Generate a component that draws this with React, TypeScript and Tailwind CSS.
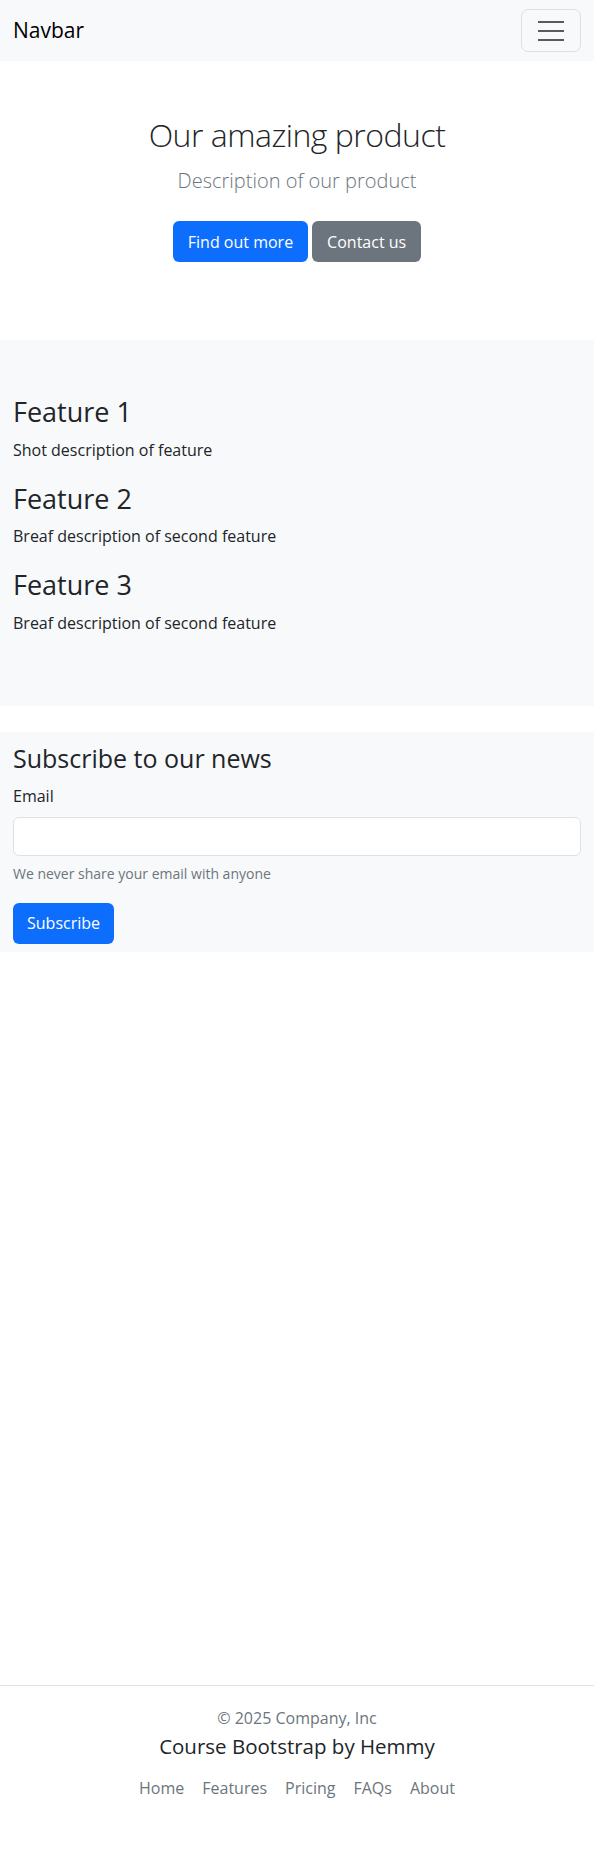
const font = { fontFamily: '"Open Sans", "Noto Sans", sans-serif' };

function Navbar() {
  return (
    <nav className="flex h-[61px] items-center justify-between bg-[#f8f9fa] pl-[13px] pr-[13px]">
      <a className="text-[21px] text-black">Navbar</a>
      <button className="flex h-[43px] w-[60px] items-center justify-center rounded-[7px] border border-[#dfe0e1]">
        <svg width="30" height="30" viewBox="0 0 30 30">
          <path d="M2 6h26M2 15h26M2 24h26" stroke="#595c5f" strokeWidth="2" />
        </svg>
      </button>
    </nav>
  );
}

function Hero() {
  return (
    <section className="pb-[78px] pt-[55px] text-center">
      <h1 className="mb-[12px] text-[32px] font-light leading-[1.2] tracking-[-0.5px] text-[#212529]">
        Our amazing product
      </h1>
      <p className="mb-[25px] text-[20px] font-light text-[#6c757d]">Description of our product</p>
      <div className="flex justify-center gap-[4px]">
        <button className="h-[41px] rounded-[6px] bg-[#0d6efd] px-[15px] text-[16px] text-white">Find out more</button>
        <button className="h-[41px] rounded-[6px] bg-[#6c757d] px-[15px] text-[16px] text-white">Contact us</button>
      </div>
    </section>
  );
}

const features = [
  { title: 'Feature 1', text: 'Shot description of feature' },
  { title: 'Feature 2', text: 'Breaf description of second feature' },
  { title: 'Feature 3', text: 'Breaf description of second feature' },
];

function Features() {
  return (
    <section className="bg-[#f8f9fa] px-[13px] pb-[50px] pt-[56px]">
      {features.map((feature) => (
        <div key={feature.title} className="mb-[21px]">
          <h2 className="mb-[9px] text-[27px] leading-[1.2] text-[#212529]">{feature.title}</h2>
          <p className="text-[16px] leading-[1.5] text-[#212529]">{feature.text}</p>
        </div>
      ))}
    </section>
  );
}

function Subscribe() {
  return (
    <section className="mt-[26px] bg-[#f8f9fa] px-[13px] pb-[8px] pt-[11px]">
      <h3 className="mb-[11px] text-[25px] leading-[1.2] text-[#212529]">Subscribe to our news</h3>
      <label className="mb-[9px] block text-[16px] text-[#212529]">Email</label>
      <input
        type="email"
        className="block h-[39px] w-full rounded-[6px] border border-[#dee2e6] bg-white px-[12px] outline-none"
      />
      <div className="mt-[7px] text-[14px] text-[#6c757d]">We never share your email with anyone</div>
      <button className="mt-[19px] h-[41px] rounded-[6px] bg-[#0d6efd] px-[14px] text-[16px] text-white">Subscribe</button>
    </section>
  );
}

function Footer() {
  return (
    <footer className="mt-auto border-t border-[#dee2e6] pb-[53px] pt-[20px] text-center">
      <p className="text-[16px] text-[#6c757d]">© 2025 Company, Inc</p>
      <p className="mt-[1px] text-[20.5px] text-[#212529]">Course Bootstrap by Hemmy</p>
      <ul className="mt-[14px] flex justify-center">
        {['Home', 'Features', 'Pricing', 'FAQs', 'About'].map((link) => (
          <li key={link}>
            <a className="px-[9px] text-[16px] text-[#6c757d]">{link}</a>
          </li>
        ))}
      </ul>
    </footer>
  );
}

export default function App() {
  return (
    <div className="flex min-h-screen flex-col bg-white" style={font}>
      <Navbar />
      <Hero />
      <Features />
      <Subscribe />
      <Footer />
    </div>
  );
}
